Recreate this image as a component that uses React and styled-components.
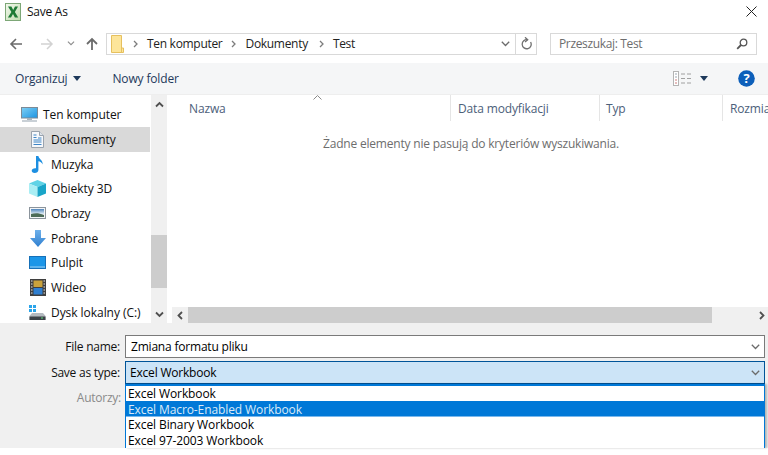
import React from "react";
import styled, { createGlobalStyle } from "styled-components";

const Global = createGlobalStyle`
  html, body { margin: 0; padding: 0; background: #fff; }
  body { font-family: "Open Sans", "Noto Sans", sans-serif; font-size: 12px; letter-spacing: -0.15px; color: #111; }
  * { box-sizing: border-box; }
`;

const Dialog = styled.div`
  width: 768px;
  height: 455px;
  overflow: hidden;
  background: #fff;
  display: flex;
  flex-direction: column;
`;

const TitleBar = styled.div`
  height: 23px;
  margin-bottom: 1px;
  display: flex;
  align-items: center;
  padding: 0 11px 0 5px;
  gap: 6px;
`;

const Title = styled.span`
  flex: 1;
  letter-spacing: -0.25px;
  color: #111;
`;

const NavBar = styled.div`
  height: 39px;
  display: flex;
  align-items: center;
  padding: 0 0 0 9px;
`;

const NavButton = styled.div`
  width: ${(p) => p.$w || 14}px;
  margin-right: ${(p) => p.$mr || 0}px;
  display: flex;
  justify-content: center;
`;

const Address = styled.div`
  width: 431px;
  height: 22px;
  border: 1px solid #d9d9d9;
  display: flex;
  align-items: center;
  padding-left: 4px;
  margin-left: 7px;
`;

const Crumb = styled.span`
  display: flex;
  align-items: center;
  gap: 9px;
  margin-left: ${(p) => p.$ml || 9}px;
  letter-spacing: -0.3px;
  color: #222;
`;

const CrumbSpacer = styled.div`
  flex: 1;
`;

const AddressEnd = styled.div`
  width: 21px;
  height: 20px;
  border-left: 1px solid #d9d9d9;
  display: flex;
  align-items: center;
  justify-content: center;
  margin-left: 5px;
`;

const Search = styled.div`
  width: 207px;
  height: 22px;
  margin-left: 13px;
  border: 1px solid #d9d9d9;
  display: flex;
  align-items: center;
  justify-content: space-between;
  padding: 0 8px 0 8px;
  letter-spacing: -0.35px;
  color: #6d6d6d;
`;

const ToolBar = styled.div`
  height: 31px;
  background: #f5f6f7;
  display: flex;
  align-items: center;
  padding: 0 13px 0 15px;
  color: #1e395b;
`;

const ToolLabel = styled.span`
  display: flex;
  align-items: center;
  gap: ${(p) => p.$gap || 6}px;
  margin-right: ${(p) => p.$mr || 0}px;
`;

const ToolSpacer = styled.div`
  flex: 1;
`;

const Divider = styled.div`
  height: 1px;
  background: #eeeeee;
`;

const Main = styled.div`
  height: 228px;
  display: flex;
`;

const Sidebar = styled.div`
  width: 151px;
  padding: 7.3px 1px 0 0;
  display: flex;
  flex-direction: column;
`;

const TreeItem = styled.div`
  height: 24.7px;
  flex: none;
  display: flex;
  align-items: center;
  padding-left: ${(p) => (p.$root ? 21 : 29)}px;
  gap: 5px;
  letter-spacing: -0.05px;
  background: ${(p) => (p.$selected ? "#d9d9d9" : "transparent")};
  color: #111;
`;

const IconSlot = styled.span`
  width: 17px;
  height: 17px;
  flex: none;
  display: flex;
  align-items: center;
  justify-content: center;
`;

const VScroll = styled.div`
  width: 16px;
  background: #f0f0f0;
  display: flex;
  flex-direction: column;
  align-items: center;
  justify-content: space-between;
  position: relative;
  padding: 5px 0 4px;
`;

const VThumb = styled.div`
  position: absolute;
  top: 140px;
  left: 0;
  right: 0;
  height: 53px;
  background: #cdcdcd;
`;

const ListPane = styled.div`
  flex: 1;
  margin-left: 5px;
  display: flex;
  flex-direction: column;
  position: relative;
  min-width: 0;
`;

const HeaderRow = styled.div`
  height: 26px;
  display: flex;
  color: #4c607a;
`;

const HeaderCell = styled.div`
  width: ${(p) => p.$w}px;
  flex: none;
  padding: 5px 0 0 ${(p) => p.$pad || 7}px;
  border-right: ${(p) => (p.$last ? "none" : "1px solid #e5e5e5")};
  white-space: nowrap;
  overflow: hidden;
`;

const SortCaret = styled.svg`
  position: absolute;
  left: 141px;
  top: 0;
`;

const Empty = styled.div`
  flex: 1;
  text-align: center;
  padding: 14px 0 0 2px;
  letter-spacing: -0.2px;
  color: #6d6d6d;
`;

const HScroll = styled.div`
  height: 16px;
  background: #f0f0f0;
  display: flex;
  align-items: center;
`;

const HButton = styled.div`
  width: ${(p) => p.$w || 16}px;
  height: 16px;
  flex: none;
  display: flex;
  align-items: center;
  justify-content: center;
`;

const HThumb = styled.div`
  width: 524px;
  height: 16px;
  background: #cdcdcd;
`;

const HTrack = styled.div`
  flex: 1;
`;

const Form = styled.div`
  height: 125px;
  background: #f0f0f0;
  padding-top: 12px;
  position: relative;
`;

const FormRow = styled.div`
  height: 23px;
  margin-bottom: 3px;
  display: flex;
  align-items: center;
`;

const FormLabel = styled.div`
  width: 120px;
  text-align: right;
  letter-spacing: -0.25px;
  color: #111;
`;

const Field = styled.div`
  width: 640px;
  height: 23px;
  margin-left: 5px;
  display: flex;
  align-items: center;
  justify-content: space-between;
  padding: 0 4px 0 ${(p) => (p.$focused ? 4 : 5)}px;
  letter-spacing: -0.2px;
  color: #000;
  background: ${(p) => (p.$focused ? "#cce4f7" : "#fff")};
  border: 1px solid ${(p) => (p.$focused ? "#005499" : "#7a7a7a")};
`;

const AuthorRow = styled.div`
  position: absolute;
  left: 0;
  top: 66px;
  width: 121px;
  text-align: right;
  letter-spacing: -0.25px;
  color: #8a8a8a;
`;

const DropList = styled.ul`
  position: absolute;
  left: 125px;
  top: 61px;
  width: 640px;
  margin: 0;
  padding: 0;
  list-style: none;
  background: #fff;
  border: 1px solid #0078d7;
  border-top-width: 2px;
  border-bottom: none;
  box-shadow: 2px 0 2px rgba(0, 0, 0, 0.25);
`;

const DropItem = styled.li`
  height: ${(p) => p.$h}px;
  line-height: 15px;
  padding: ${(p) => p.$h - 15}px 0 0 2px;
  letter-spacing: -0.1px;
  background: ${(p) => (p.$active ? "#0078d7" : "transparent")};
  box-shadow: ${(p) => (p.$active ? "inset 0 -1px 0 #7ab8ec" : "none")};
  color: ${(p) => (p.$active ? "#dbeaf8" : "#000")};
`;

const BackIcon = () => (
  <svg width="14" height="14" viewBox="0 0 14 14" fill="none" stroke="#6b6b6b" strokeWidth="1.6">
    <path d="M13 7H2M7 2 2 7l5 5" />
  </svg>
);

const ForwardIcon = () => (
  <svg width="14" height="14" viewBox="0 0 14 14" fill="none" stroke="#d2d2d2" strokeWidth="1.5">
    <path d="M1 7h11M7 2l5 5-5 5" />
  </svg>
);

const UpIcon = () => (
  <svg width="14" height="14" viewBox="0 0 14 14" fill="none" stroke="#6b6b6b" strokeWidth="1.8">
    <path d="M7 13V2M2 7l5-5 5 5" />
  </svg>
);

const Chevron = ({ color = "#6b6b6b", size = 9 }) => (
  <svg width={size} height={size - 3} viewBox="0 0 9 6" fill="none" stroke={color} strokeWidth="1.3">
    <path d="M.8.8 4.5 4.5 8.2.8" />
  </svg>
);

const CrumbArrow = () => (
  <svg width="5" height="8" viewBox="0 0 5 8" fill="none" stroke="#7c7c7c" strokeWidth="1.3">
    <path d="M1 1l3 3-3 3" />
  </svg>
);

const FolderIcon = () => (
  <svg width="13" height="18" viewBox="0 0 13 18">
    <path d="M.5.5h10v12.5h2v4.5H.5z" fill="#fde59a" stroke="#e6c05e" />
    <path d="M10.5 13v4.5" stroke="#e6c05e" />
  </svg>
);

const RefreshIcon = () => (
  <svg width="11" height="13" viewBox="0 0 11 13" fill="none" stroke="#707070" strokeWidth="1.3">
    <path d="M6.5 2.8A4.5 4.5 0 1 0 9.6 5" />
    <path d="M4 .3 6.7 2.8 4 5" />
  </svg>
);

const SearchIcon = () => (
  <svg width="12" height="12" viewBox="0 0 12 12" fill="none" stroke="#555" strokeWidth="1.3">
    <circle cx="7.5" cy="4.5" r="3.3" />
    <path d="M5 7 1.2 10.8" strokeWidth="1.8" />
  </svg>
);

const CloseIcon = () => (
  <svg width="11" height="11" viewBox="0 0 11 11" fill="none" stroke="#222" strokeWidth="1">
    <path d="M.5.5l10 10M10.5.5l-10 10" />
  </svg>
);

const ExcelIcon = () => (
  <svg width="16" height="18" viewBox="0 0 16 18">
    <defs>
      <linearGradient id="xlBg" x1="0" y1="0" x2="1" y2="1">
        <stop offset="0" stopColor="#f4f9ee" />
        <stop offset="1" stopColor="#bfdcae" />
      </linearGradient>
    </defs>
    <rect x=".5" y=".5" width="15" height="17" fill="url(#xlBg)" stroke="#7da777" />
    <path d="M3 3.5h3.4l1.8 3.4L10 3.5h3L9.9 9l3.3 5.5H9.9L8 11l-2 3.5H2.9L6.4 9z" fill="#1d7a34" />
  </svg>
);

const ViewIcon = () => (
  <svg width="18" height="15" viewBox="0 0 18 15" fill="none">
    <rect x=".5" y=".5" width="5" height="14" fill="#fff" stroke="#b4b4b4" />
    <path d="M2 3h2M2 6h2" stroke="#9aa5b0" />
    <path d="M2 9h2M2 12h2" stroke="#cc7a7a" />
    <path d="M8 3h4M14 3h4M8 7.5h4M14 7.5h4M8 12h4M14 12h4" stroke="#a0a0a0" />
  </svg>
);

const DropCaret = ({ color = "#1e395b" }) => (
  <svg width="8" height="5" viewBox="0 0 8 5">
    <path d="M0 0h8L4 5z" fill={color} />
  </svg>
);

const HelpIcon = () => (
  <svg width="17" height="17" viewBox="0 0 17 17">
    <circle cx="8.5" cy="8.5" r="8.3" fill="#0d5fba" />
    <text x="8.5" y="13" textAnchor="middle" fontSize="13" fontWeight="700" fontFamily="Open Sans, sans-serif" fill="#fff">?</text>
  </svg>
);

const ComputerIcon = () => (
  <svg width="17" height="15" viewBox="0 0 17 15">
    <defs>
      <linearGradient id="pcScreen" x1="0" y1="0" x2="1" y2="1">
        <stop offset="0" stopColor="#7fd0f5" />
        <stop offset="1" stopColor="#1c93e0" />
      </linearGradient>
    </defs>
    <rect x=".5" y=".5" width="16" height="10.5" fill="url(#pcScreen)" stroke="#7d8a96" />
    <rect x="6" y="11" width="5" height="2" fill="#a9b4bc" />
    <rect x="1" y="13" width="15" height="2" fill="#c9d0d6" />
  </svg>
);

const DocIcon = () => (
  <svg width="13" height="17" viewBox="0 0 13 17">
    <path d="M.5.5h8l4 4v12H.5z" fill="#f6f8fb" stroke="#9aa3ad" />
    <path d="M8.5.5v4h4" fill="#dfe5ec" stroke="#9aa3ad" />
    <path d="M2.5 4h3M2.5 6.5h3M7 7h3.5M2.5 9h8M2.5 11h8M2.5 13.5h8" stroke="#3d85c6" />
  </svg>
);

const MusicIcon = () => (
  <svg width="13" height="17" viewBox="0 0 13 17">
    <path d="M5 0h2.4c.3 3 4.6 4 4.3 8.5-.8-2-2.6-3-4.3-3.2V14c0 1.8-1.8 3-3.7 3C1.6 17 .7 16 .7 14.8c0-1.6 2-2.9 4.3-2.5z" fill="#1d8fe1" />
  </svg>
);

const CubeIcon = () => (
  <svg width="17" height="17" viewBox="0 0 17 17">
    <path d="M8.5 0l8.5 3.5L8.5 7 0 3.5z" fill="#5fd3e6" />
    <path d="M0 3.5 8.5 7v10L0 13.5z" fill="#a9eef4" />
    <path d="M17 3.5 8.5 7v10l8.5-3.5z" fill="#19a5c8" />
  </svg>
);

const PictureIcon = () => (
  <svg width="17" height="12" viewBox="0 0 17 12">
    <defs>
      <linearGradient id="picSky" x1="0" y1="0" x2="0" y2="1">
        <stop offset="0" stopColor="#4e84bb" />
        <stop offset="1" stopColor="#e2eef6" />
      </linearGradient>
    </defs>
    <rect x=".5" y=".5" width="16" height="11" fill="#f2f4f6" stroke="#8b949c" />
    <rect x="2" y="2" width="13" height="5" fill="url(#picSky)" />
    <path d="M2 7c4-1 8-1 13 1v2H2z" fill="#4d6c58" />
  </svg>
);

const DownloadIcon = () => (
  <svg width="16" height="17" viewBox="0 0 16 17">
    <defs>
      <linearGradient id="dlFill" x1="0" y1="0" x2="0" y2="1">
        <stop offset="0" stopColor="#6fb1ea" />
        <stop offset="1" stopColor="#2f7fd0" />
      </linearGradient>
    </defs>
    <path d="M5 0h6v8h5l-8 9-8-9h5z" fill="url(#dlFill)" />
  </svg>
);

const DesktopIcon = () => (
  <svg width="17" height="13" viewBox="0 0 17 13">
    <rect x=".5" y=".5" width="16" height="12" fill="#1c96e8" stroke="#1670b8" />
    <path d="M1 11h15" stroke="#9fd0f2" />
  </svg>
);

const VideoIcon = () => (
  <svg width="16" height="17" viewBox="0 0 16 17">
    <rect width="16" height="17" fill="#3f3f3f" />
    <rect x="3.5" y="1.5" width="9" height="6.5" fill="#c9a23c" />
    <rect x="3.5" y="9" width="9" height="6.5" fill="#2f7fd1" />
    <path d="M1 2h1.5M1 5h1.5M1 8h1.5M1 11h1.5M1 14h1.5M13.5 2H15M13.5 5H15M13.5 8H15M13.5 11H15M13.5 14H15" stroke="#e6e6e6" />
  </svg>
);

const DriveIcon = () => (
  <svg width="17" height="15" viewBox="0 0 17 15">
    <path d="M0 0h3v3H0zM4 0h3v3H4zM0 4h3v3H0zM4 4h3v3H4z" fill="#2aa4ea" />
    <path d="M3 8h11l2.5 3v4H.5v-4z" fill="#b4bac0" />
    <rect x=".5" y="11.5" width="16" height="3.5" fill="#3c4248" />
    <rect x="12" y="12.5" width="2" height="1" fill="#5fe07a" />
  </svg>
);

const ScrollArrow = ({ d }) => (
  <svg width="9" height="9" viewBox="0 0 9 9" fill="none" stroke="#505050" strokeWidth="1.8">
    <path d={d} />
  </svg>
);

const tree = [
  { label: "Ten komputer", icon: <ComputerIcon />, root: true },
  { label: "Dokumenty", icon: <DocIcon />, selected: true },
  { label: "Muzyka", icon: <MusicIcon /> },
  { label: "Obiekty 3D", icon: <CubeIcon /> },
  { label: "Obrazy", icon: <PictureIcon /> },
  { label: "Pobrane", icon: <DownloadIcon /> },
  { label: "Pulpit", icon: <DesktopIcon /> },
  { label: "Wideo", icon: <VideoIcon /> },
  { label: "Dysk lokalny (C:)", icon: <DriveIcon /> },
];

const fileTypes = [
  { label: "Excel Workbook", h: 15 },
  { label: "Excel Macro-Enabled Workbook", h: 16, active: true },
  { label: "Excel Binary Workbook", h: 15 },
  { label: "Excel 97-2003 Workbook", h: 16 },
];

export default function App() {
  return (
    <Dialog>
      <Global />
      <TitleBar>
        <ExcelIcon />
        <Title>Save As</Title>
        <CloseIcon />
      </TitleBar>

      <NavBar>
        <NavButton $w={14} $mr={17}><BackIcon /></NavButton>
        <NavButton $w={14} $mr={13}><ForwardIcon /></NavButton>
        <NavButton $w={8} $mr={10}><Chevron color="#8c8c8c" size={8} /></NavButton>
        <NavButton $w={14}><UpIcon /></NavButton>
        <Address>
          <FolderIcon />
          <Crumb><CrumbArrow />Ten komputer</Crumb>
          <Crumb><CrumbArrow />Dokumenty</Crumb>
          <Crumb $ml={11}><CrumbArrow />Test</Crumb>
          <CrumbSpacer />
          <Chevron />
          <AddressEnd><RefreshIcon /></AddressEnd>
        </Address>
        <Search>
          Przeszukaj: Test
          <SearchIcon />
        </Search>
      </NavBar>

      <ToolBar>
        <ToolLabel $mr={31}>Organizuj <DropCaret /></ToolLabel>
        <ToolLabel>Nowy folder</ToolLabel>
        <ToolSpacer />
        <ToolLabel $mr={30} $gap={9}><ViewIcon /><DropCaret /></ToolLabel>
        <HelpIcon />
      </ToolBar>
      <Divider />

      <Main>
        <Sidebar>
          {tree.map((t) => (
            <TreeItem key={t.label} $root={t.root} $selected={t.selected}>
              <IconSlot>{t.icon}</IconSlot>
              {t.label}
            </TreeItem>
          ))}
        </Sidebar>
        <VScroll>
          <ScrollArrow d="M1 6.5 4.5 3 8 6.5" />
          <VThumb />
          <ScrollArrow d="M1 2.5 4.5 6 8 2.5" />
        </VScroll>
        <ListPane>
          <SortCaret width="9" height="5" viewBox="0 0 9 5" fill="none" stroke="#8a8a8a">
            <path d="M.5 4.5l4-4 4 4" />
          </SortCaret>
          <HeaderRow>
            <HeaderCell $w={279} $pad={17}>Nazwa</HeaderCell>
            <HeaderCell $w={149}>Data modyfikacji</HeaderCell>
            <HeaderCell $w={123} $pad={6}>Typ</HeaderCell>
            <HeaderCell $w={45} $last>Rozmiar</HeaderCell>
          </HeaderRow>
          <Empty>Żadne elementy nie pasują do kryteriów wyszukiwania.</Empty>
          <HScroll>
            <HButton><ScrollArrow d="M6 1 2.5 4.5 6 8" /></HButton>
            <HThumb />
            <HTrack />
            <HButton $w={13}><ScrollArrow d="M3 1 6.5 4.5 3 8" /></HButton>
          </HScroll>
        </ListPane>
      </Main>

      <Form>
        <FormRow>
          <FormLabel>File name:</FormLabel>
          <Field>Zmiana formatu pliku<Chevron /></Field>
        </FormRow>
        <FormRow>
          <FormLabel>Save as type:</FormLabel>
          <Field $focused>Excel Workbook<Chevron /></Field>
        </FormRow>
        <AuthorRow>Autorzy:</AuthorRow>
        <DropList>
          {fileTypes.map((f) => (
            <DropItem key={f.label} $h={f.h} $active={f.active}>{f.label}</DropItem>
          ))}
        </DropList>
      </Form>
    </Dialog>
  );
}
